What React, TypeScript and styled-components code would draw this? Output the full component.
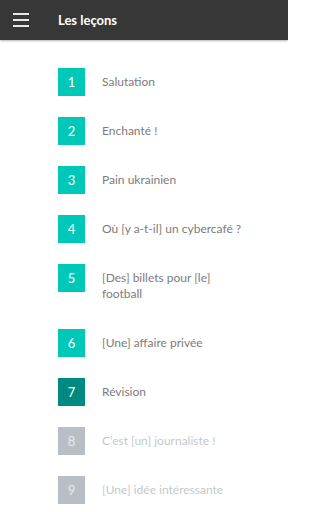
import React from "react";
import styled, { createGlobalStyle } from "styled-components";

const Global = createGlobalStyle`
  html, body { margin: 0; padding: 0; background: #ffffff; }
  body { font-family: Lato, "Open Sans", sans-serif; }
`;

const Page = styled.div`
  width: 288px;
  height: 512px;
  overflow: hidden;
  background: #ffffff;
`;

const Header = styled.header`
  height: 40px;
  background: #373737;
  display: flex;
  align-items: center;
  box-shadow: 0 1px 2px rgba(0, 0, 0, 0.3);
  position: relative;
`;

const MenuButton = styled.div`
  width: 16px;
  margin-left: 13px;
  display: flex;
  flex-direction: column;
  gap: 4px;
`;

const MenuLine = styled.span`
  display: block;
  height: 2px;
  background: #e8e8e8;
`;

const Title = styled.h1`
  margin: 0 0 0 29px;
  color: #ffffff;
  font-family: Lato, sans-serif;
  font-weight: 700;
  font-size: 13px;
`;

const List = styled.ul`
  list-style: none;
  margin: 0;
  padding: 28px 0 0 58px;
  display: flex;
  flex-direction: column;
  gap: 21px;
`;

const Row = styled.li`
  display: flex;
  align-items: flex-start;
  gap: 17px;
`;

type Status = "open" | "current" | "locked";

const Badge = styled.div<{ $status: Status }>`
  flex: none;
  width: 27px;
  height: 28px;
  display: flex;
  align-items: center;
  justify-content: center;
  color: ${(p) => (p.$status === "locked" ? "#e6e9ec" : "#ffffff")};
  background: ${(p) =>
    p.$status === "current" ? "#00897e" : p.$status === "locked" ? "#b9bec6" : "#00c8b9"};
  font-size: 13px;
  font-family: Lato, sans-serif;
`;

const Label = styled.span<{ $status: Status }>`
  color: ${(p) => (p.$status === "locked" ? "#c4c8ce" : "#7c7c7c")};
  font-size: 12px;
  line-height: 16px;
  padding: 6px 0;
  max-width: 148px;
  font-family: Lato, sans-serif;
`;

const lessons: { label: string; status: Status }[] = [
  { label: "Salutation", status: "open" },
  { label: "Enchanté !", status: "open" },
  { label: "Pain ukrainien", status: "open" },
  { label: "Où [y a-t-il] un cybercafé ?", status: "open" },
  { label: "[Des] billets pour [le] football", status: "open" },
  { label: "[Une] affaire privée", status: "open" },
  { label: "Révision", status: "current" },
  { label: "C’est [un] journaliste !", status: "locked" },
  { label: "[Une] idée intéressante", status: "locked" },
];

export default function App() {
  return (
    <Page>
      <Global />
      <Header>
        <MenuButton>
          <MenuLine />
          <MenuLine />
          <MenuLine />
        </MenuButton>
        <Title>Les leçons</Title>
      </Header>
      <List>
        {lessons.map((l, i) => (
          <Row key={i}>
            <Badge $status={l.status}>{i + 1}</Badge>
            <Label $status={l.status}>{l.label}</Label>
          </Row>
        ))}
      </List>
    </Page>
  );
}
